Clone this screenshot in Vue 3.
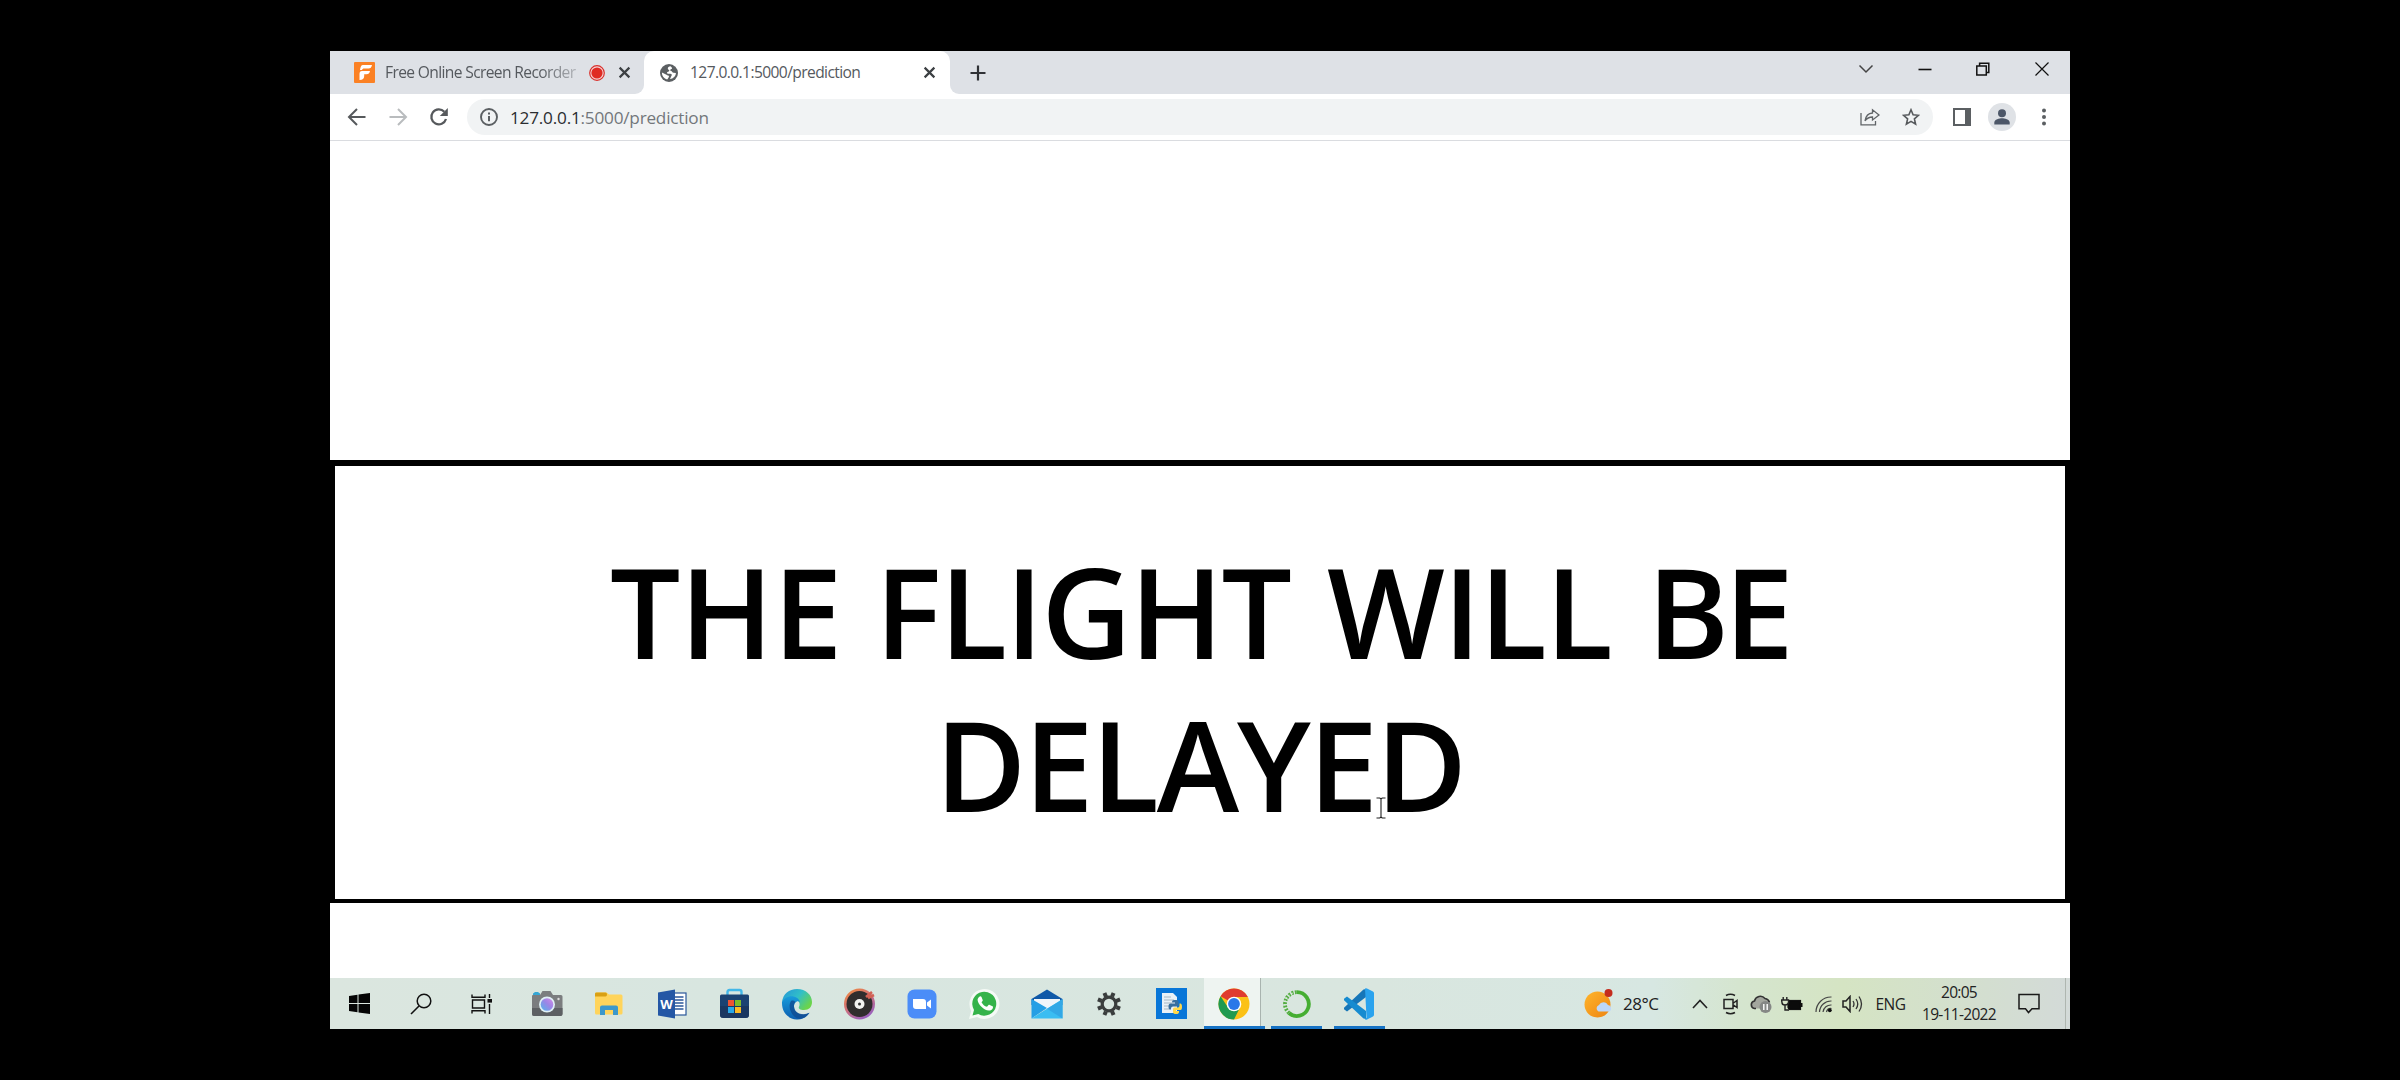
<script setup>
const first = ['THE', 'FLIGHT', 'WILL', 'BE']
</script>

<template>
  <div class="stage">
    <div class="window">
      <header class="tabs">
        <div class="tab idle">
          <svg class="fav" viewBox="0 0 21 21"><rect width="21" height="21" rx="1" fill="#fb8124" /><path d="M9 3h9c-.5 2.500-1.500 3.500-3.500 3.500H10c-1 0-1.500.5-2 1.500H6C6.500 5 7 3 9 3zM8 9h8c-.5 2.300-1.500 3.200-3.500 3.200h-2.300V14c0 2.500-1.500 4-4.700 4v-6C5.500 10 6.300 9 8 9z" fill="#fff" /></svg>
          <span class="title t1">Free Online Screen Recorder</span>
          <svg class="rec" viewBox="0 0 16 16"><circle cx="8" cy="8" r="7.300" fill="#f4d5d6" stroke="#d9302c" stroke-width="1.200" /><circle cx="8" cy="8" r="5.600" fill="#df2a22" /></svg>
          <svg class="x" viewBox="0 0 12 12"><path d="M1.500 1.500l9 9m0-9l-9 9" /></svg>
        </div>
        <div class="tab live">
          <svg class="globe" viewBox="0 0 18 18"><circle cx="9" cy="9" r="9" fill="#5b5f62" /><path d="M10.500 2.200c-1.700.2-2.700 1-2.700 2.300s1.500 1.200 1.500 2.200-2.300.8-2.300 2 1.600 1.100 3.200 1.100 2 1 1.300 2-.6 1.600-1.600 3.200c3.500-.3 5.900-2.700 6-6l-2.400-.2c-1.300 0-1.200-1.900-2.500-1.900s-.9-1.500.3-1.800 1-1.600-.8-2.900zM1.900 8.500l3.600 1.700c1.500.7 1.800 1.200 2.700 1.300s1 1.200.4 2-.6 1.500-1.500 2C4.100 14.700 1.900 12 1.900 8.500z" fill="#fff" /></svg>
          <span class="title t2">127.0.0.1:5000/prediction</span>
          <svg class="x" viewBox="0 0 12 12"><path d="M1.500 1.500l9 9m0-9l-9 9" /></svg>
        </div>
        <div class="strip">
          <svg class="plus" viewBox="0 0 16 16"><path d="M8 .5v15M.5 8h15" /></svg>
          <div class="controls">
            <svg viewBox="0 0 16 16"><path d="M1.500 4.500L8 11l6.500-6.500" stroke="#444" /></svg>
            <svg viewBox="0 0 16 16"><path d="M1.500 8.500h13" stroke-width="1.600" /></svg>
            <svg viewBox="0 0 16 16"><path d="M1.800 5h9.500v9H1.800zM4.600 4.500V2.200h9.200v9.300H11.500" stroke-width="1.500" /></svg>
            <svg viewBox="0 0 16 16"><path d="M1.500 1.500l13 13m0-13l-13 13" stroke-width="1.200" /></svg>
          </div>
        </div>
      </header>

      <nav class="toolbar">
        <div class="navs">
          <svg viewBox="0 0 20 20"><path d="M18.500 10H2.500M10 2L2 10l8 8" stroke="#56595c" /></svg>
          <svg viewBox="0 0 20 20"><path d="M1.500 10h16M10 2l8 8-8 8" stroke="#b9bcbe" /></svg>
          <svg viewBox="0 0 20 20"><path d="M17 12a7.500 7.500 0 1 1-1.700-7.300" stroke="#56595c" stroke-width="2.300" /><path d="M18.800 1v8h-8z" fill="#56595c" /></svg>
        </div>
        <div class="pill">
          <svg class="info" viewBox="0 0 18 18"><circle cx="9" cy="9" r="8" fill="none" stroke="#5b5f62" stroke-width="1.900" /><path d="M9 8v5.300M9 4.600v2" stroke="#5b5f62" stroke-width="2" /></svg>
          <span class="url"><b>127.0.0.1</b>:5000/prediction</span>
          <svg class="share" viewBox="0 0 20 18"><path d="M1 5v11.800h14.500V13M5 12.800C5.800 8 8.500 5.300 12.500 5V1.800L19 7l-6.500 5V9C9.500 9 7 10 5 12.800z" fill="none" stroke="#606467" stroke-width="1.300" /></svg>
          <svg class="star" viewBox="0 0 18 18"><path d="M9 1.800l2.100 5 5.400.5-4.100 3.600 1.200 5.300L9 13.400l-4.600 2.800 1.200-5.300-4.100-3.600 5.400-.5z" fill="none" stroke="#56595c" stroke-width="1.600" /></svg>
        </div>
        <svg class="side" viewBox="0 0 18 18"><path d="M0 0h18v18H0zM2 2v14h10V2z" fill="#5b5f62" fill-rule="evenodd" /></svg>
        <svg class="avatar" viewBox="0 0 28 28"><circle cx="14" cy="14" r="14" fill="#dfe2e6" /><circle cx="14" cy="10.200" r="4" fill="#4d5768" /><path d="M6.300 21.500v-2c0-3 5.200-4.300 7.700-4.300s7.700 1.300 7.700 4.300v2z" fill="#4d5768" /></svg>
        <svg class="dots" viewBox="0 0 6 18"><circle v-for="n in 3" :key="n" cx="3" :cy="n * 6.500 - 4" r="2" fill="#5b5f62" /></svg>
      </nav>

      <main class="page">
        <div class="result">
          <h1>
            <span class="line"><span v-for="w in first" :key="w" :class="w.toLowerCase()">{{ w }}</span></span>
            <span class="line second"><span class="delayed">DELAYED</span></span>
          </h1>
          <svg class="cursor" viewBox="0 0 10 22"><path d="M.5 1h3.300L5 2l1.200-1h3.300M.5 21h3.300L5 20l1.200 1h3.300M5 2v18" fill="none" stroke="#fff" stroke-width="2.600" /><path d="M.5 1h3.300L5 2l1.200-1h3.300M.5 21h3.300L5 20l1.200 1h3.300M5 2v18" fill="none" stroke="#222" stroke-width="1.100" /></svg>
        </div>
      </main>

      <footer class="taskbar">
        <div class="cell start"><svg width="21" height="21" viewBox="0 0 21 21"><path d="M0 3l8.500-1.200v8.200H0zM9.500 1.600L21 0v10H9.500zM0 11h8.500v8.200L0 18zM9.500 11H21v10L9.500 19.400z" fill="#050505" /></svg></div>
        <div class="cell search"><svg width="22" height="22" viewBox="0 0 22 22"><circle cx="14" cy="8" r="6.800" fill="none" stroke="#111" stroke-width="1.500" /><path d="M9 13L1 21" stroke="#111" stroke-width="1.600" /></svg></div>
        <div class="cell view"><svg width="22" height="22" viewBox="0 0 22 22"><path d="M1 1.500v2.800h13V1.500M1.500 7h12v8h-12zM1 20.500v-2.800h13v2.800M18.500 1v4M18.500 11v10" fill="none" stroke="#111" stroke-width="1.400" /><rect x="16.500" y="6" width="4.500" height="3.600" fill="#111" /></svg></div>
        <div class="cell"><svg width="32" height="26" viewBox="0 0 32 26"><path d="M2 5V2.500L4 1h3l2 1.500V5z" fill="#35a7d5" /><path d="M1 5q0-1 1-1h7l2.500-4h8L22 4h8q1.500 0 1.500 1.500V23q0 2-2 2H3q-2 0-2-2z" fill="#7b7d7f" /><path d="M1 17h30.500v6q0 2-2 2H3q-2 0-2-2z" fill="#5d6063" /><circle cx="16" cy="13.500" r="8" fill="#dff0f5" /><circle cx="16" cy="13.500" r="6.300" fill="url(#lens)" /><circle cx="27.500" cy="8" r="1.200" fill="#ddd" /><defs><linearGradient id="lens" x1="0" y1="1" x2="1" y2="0"><stop offset="0" stop-color="#51b5ec" /><stop offset=".55" stop-color="#9c85e6" /><stop offset="1" stop-color="#d68be7" /></linearGradient></defs></svg></div>
        <div class="cell"><svg width="28" height="24" viewBox="0 0 28 24"><path d="M0 2q0-1.500 1.500-1.500h10L14 2.500h12q1.500 0 1.500 1.500v17q0 1.500-1.500 1.500H1.500Q0 22.500 0 21z" fill="#ffd45b" /><path d="M0 1.500Q0 .5 1.500.5h9q1.500 0 1.500 2T10.500 4.500H0z" fill="#d9a014" /><path d="M5 23V15.500q0-2 2-2h14q2 0 2 2V23h-5v-5h-8v5z" fill="#3c98cb" /></svg></div>
        <div class="cell"><svg width="30" height="30" viewBox="0 0 30 30"><rect x="15" y="4" width="14" height="22" fill="#fff" stroke="#2b579a" stroke-width="1.200" /><path d="M18 8h8.500M18 11h8.500M18 14h8.500M18 17h8.500M18 20h8.500" stroke="#2b579a" stroke-width="1.300" /><path d="M1 3.500L18 .5v29L1 26.500z" fill="#2457a5" /><text x="9.500" y="19.500" text-anchor="middle" fill="#fff" font-size="13" font-weight="700" font-family="Open Sans, sans-serif">W</text></svg></div>
        <div class="cell"><svg width="31" height="31" viewBox="0 0 31 31"><path d="M8.500 7V4q0-2 2-2h10q2 0 2 2v3" fill="none" stroke="#43b7e8" stroke-width="2.400" /><path d="M1 8q0-1.500 1.500-1.500h26Q30 6.500 30 8v19q0 3-3 3H4q-3 0-3-3z" fill="#1b4272" /><path d="M1 18h29v9q0 3-3 3H4q-3 0-3-3z" fill="#1a3157" opacity=".6" /><path d="M9 12h6v6H9z" fill="#ef5331" /><path d="M16 12h6v6h-6z" fill="#7dbc28" /><path d="M9 19h6v6H9z" fill="#29a8e8" /><path d="M16 19h6v6h-6z" fill="#fcbb26" /></svg></div>
        <div class="cell"><svg width="32" height="32" viewBox="0 0 32 32"><defs><linearGradient id="e1" x1="0" y1="0" x2="1" y2=".6"><stop offset="0" stop-color="#2495d9" /><stop offset=".55" stop-color="#31bfc8" /><stop offset="1" stop-color="#6bd44b" /></linearGradient><linearGradient id="e2" x1="0" y1="0" x2="0" y2="1"><stop offset="0" stop-color="#199cdb" /><stop offset="1" stop-color="#0d5eb0" /></linearGradient></defs><path d="M1 14C2 6 8 1 16 1c9 0 15 6 15 13 0 5-3 8-8 8-4 0-6-1.500-5-3.200 2-3.500-1-7.800-6-7.800-4.500 0-9 1-11 3z" fill="url(#e1)" /><path d="M1 14c2-4 7-6.500 11.500-5.500 3.500.8 6 3 6.500 5.500-3-2-6 1-6 4.500C13 24 18 27 23 26.500c2.500-.3 4-1.200 5.500-1.700C26 29 21 32 15.500 31.500 7 31 .5 24 1 14z" fill="url(#e2)" /><path d="M10 13c-3 5-1 12 4 16 4 3 10 2 14.500-4.200-6 3-15 1.300-15.500-6.300-.2-2 .5-3.500 1.500-4.500-1.500-1.500-3-1.800-4.500-1z" fill="#124b91" opacity=".8" /></svg></div>
        <div class="cell"><svg width="32" height="32" viewBox="0 0 32 32"><defs><linearGradient id="g" x1="0" y1="0" x2=".6" y2="1"><stop offset="0" stop-color="#f28b37" /><stop offset=".5" stop-color="#d37276" /><stop offset="1" stop-color="#9a61bd" /></linearGradient></defs><circle cx="16.500" cy="16" r="15.500" fill="url(#g)" /><circle cx="16.500" cy="16" r="13" fill="#302d2d" /><circle cx="16.500" cy="16" r="5" fill="#f2f2f0" /><circle cx="16.500" cy="16" r="1.500" fill="#333" /><path d="M23 9l6-5M25 10l6-3" stroke="#d16154" stroke-width="2.600" /></svg></div>
        <div class="cell"><svg width="30" height="30" viewBox="0 0 30 30"><rect x=".5" y=".5" width="29" height="29" rx="7" fill="#4b8df8" /><path d="M6 10h10q3 0 3 3v7H9q-3 0-3-3zM20 13.500l4-3v9l-4-3z" fill="#fff" /></svg></div>
        <div class="cell"><svg width="32" height="32" viewBox="0 0 32 32"><path d="M1 31l2.200-8A15 15 0 1 1 9 29z" fill="#f5faf6" /><path d="M4.500 27.500l1.500-5.600a12 12 0 1 1 4.300 4.200z" fill="#35b34a" /><path d="M11 9c1-1 2-1 2.500 0l1.200 3c.2.7-.2 1.200-1.200 2.200 1.300 2.400 3 3.800 5.500 4.600l1.500-1.700c.4-.5.8-.5 1.300-.2l2.700 1.300c.7.300.6 1 .3 2-.5 1.500-2.500 2.500-4 2.400-5-.4-10.800-6-11.200-10.600C9.500 11 10.200 9.800 11 9z" fill="#fff" /></svg></div>
        <div class="cell"><svg width="32" height="30" viewBox="0 0 32 30"><path d="M.5 10L16 .5 31.500 10v6H.5z" fill="#1059a8" /><path d="M3 10h26v10H3z" fill="#f1f5fa" /><path d="M.500 10L16 19 .5 29.500z" fill="#259fe5" /><path d="M31.500 10L.5 29.500h31z" fill="#3abdf2" /><path d="M16 19.800L31.500 29.500v-19z" fill="#33a8e6" /></svg></div>
        <div class="cell"><svg width="24" height="24" viewBox="0 0 24 24"><g fill="none" stroke="#3a3d3d"><circle cx="12" cy="12" r="6.800" stroke-width="3.200" /><path d="M12 0v4M12 20v4M0 12h4M20 12h4M3.500 3.500l3 3M17.500 17.500l3 3M3.500 20.500l3-3M17.500 6.500l3-3" stroke-width="4" transform="rotate(22.500 12 12)" /></g></svg></div>
        <div class="cell"><svg width="31" height="31" viewBox="0 0 31 31"><rect width="31" height="31" fill="#0876d8" /><path d="M6 5h11l4 4v16H6z" fill="#e8f1f7" /><path d="M8 9h7M8 12h10M8 15h8M8 18h6M8 21h6" stroke="#a5b8c4" stroke-width="1" /><path d="M18 12h2.500q2 0 2 2v3q0 1.500-1.500 1.500h-4q-2 0-2 2v1H14q-1.500 0-1.500-3t2-3H19v-1h-3v-.500q0-2 2-2z" fill="#386f9e" /><path d="M23.500 15.500h.8q1.700 0 1.700 3.500t-2 3h-4v1h3v1q0 2-3 2t-3-2v-3q0-1.500 1.500-1.500h3.500q1.500 0 1.500-2z" fill="#ffd849" /></svg></div>
        <div class="cell active"><svg width="32" height="32" viewBox="0 0 32 32"><circle cx="16" cy="16" r="15.500" fill="#fbc116" /><path d="M16 16L2.600 8.200A15.500 15.500 0 0 1 29.400 8.200L29.800 9H16z" fill="#df3b2f" /><path d="M2.600 8.200A15.500 15.500 0 0 0 16 31.500L22 19.500 16 16l-6 3.500z" fill="#219a50" /><circle cx="16" cy="16" r="7.300" fill="#fff" /><circle cx="16" cy="16" r="5.900" fill="#2b78e8" /></svg></div>
        <div class="cell run"><svg width="28" height="28" viewBox="0 0 28 28"><path d="M14 2.200A11.900 11.900 0 1 1 6 23" fill="none" stroke="#45ae32" stroke-width="3.800" /><path d="M6 23A11.900 11.900 0 0 1 14 2.200" fill="none" stroke="#54ad42" stroke-width="3.800" stroke-dasharray="2 1.300" /><path d="M4.500 22A12 12 0 0 1 12 2.500" fill="none" stroke="#d9e9dd" stroke-width="1.200" stroke-dasharray="1.500 2" /></svg></div>
        <div class="cell run"><svg width="32" height="32" viewBox="0 0 32 32"><path d="M23 1v8L4 23.500l-3-2.300v-1.500L20.500 1.500z" fill="#1676b8" /><path d="M23 31v-8L4 8.500l-3 2.300v1.500L20.500 30.500z" fill="#168bd0" /><path d="M22 .5q1-.5 2 0L30 3.500q1 .5 1 1.700v21.600q0 1.200-1 1.700l-6 3q-1 .5-2 0l1.500-2z" fill="#2aa3ee" /></svg></div>

        <div class="tray">
          <svg width="29" height="29" viewBox="0 0 29 29"><defs><linearGradient id="sun" x1="0" y1="0" x2="1" y2="1"><stop offset="0" stop-color="#ffb52b" /><stop offset="1" stop-color="#ed8412" /></linearGradient></defs><circle cx="13.500" cy="15.500" r="13" fill="url(#sun)" /><path d="M14.500 22.500a3.600 3.600 0 0 1 .5-6.600 4.900 4.900 0 0 1 8.900.2 3.300 3.300 0 0 1 1 6.400z" fill="#bcd7fa" /><circle cx="24.500" cy="4" r="4" fill="#c42c1d" /></svg>
          <span class="temp">28°C</span>
          <svg width="18" height="18" viewBox="0 0 18 18"><path d="M2 13l7-7.500L16 13" fill="none" stroke="#222" stroke-width="1.600" /></svg>
          <svg width="18" height="22" viewBox="0 0 18 22"><path d="M4 2.500q4.500-2.500 9 0M4 19.500q4.500 2.500 9 0M2 6.500h9v9H2zM11.500 10l3.500-2.500v7L11.500 12" fill="none" stroke="#222" stroke-width="1.500" /></svg>
          <svg class="cloud" width="22" height="20" viewBox="0 0 22 20"><path d="M4.500 14.500a3.800 3.800 0 0 1 0-7.500A6 6 0 0 1 15 4.500q3.500.5 4.500 4v6z" fill="#a3a69e" /><path d="M6 14.500H4.500a3.800 3.800 0 0 1 0-7.500A6 6 0 0 1 15 4.500q3.500.5 4.500 4" fill="none" stroke="#333" stroke-width="1.600" /><circle cx="15.500" cy="13" r="6" fill="#858785" /><path d="M13.800 10v6M17.200 10v6" stroke="#fff" stroke-width="1.400" /></svg>
          <svg width="22" height="18" viewBox="0 0 22 18"><rect x="7" y="5.500" width="12.500" height="9" fill="#0b0b0b" stroke="#111" stroke-width="1.200" /><path d="M20.500 8v4" stroke="#111" stroke-width="2" /><path d="M.5 5h7v2.500Q7 10 4 10T1 7.500zM2.200 2v3M5.800 2v3M4 10v5h4" fill="#d7e3c8" stroke="#222" stroke-width="1.400" /></svg>
          <svg width="18" height="18" viewBox="0 0 18 18"><g fill="none" stroke="#444" stroke-width="1.200"><path d="M1 17A15 15 0 0 1 16.500 2M4.500 17A11.500 11.500 0 0 1 16.500 6M8 17a8 8 0 0 1 8.500-7M11.500 17a4.500 4.500 0 0 1 5-3.500" /></g><circle cx="14.800" cy="15.300" r="1.900" fill="#111" /></svg>
          <svg width="22" height="18" viewBox="0 0 22 18"><path d="M1 6h3l4-4.500v15L4 12H1z" fill="none" stroke="#222" stroke-width="1.500" /><path d="M11 6q2 3 0 6M14 4q3.500 5 0 10M17 1.500q5 7.500 0 15" fill="none" stroke="#333" stroke-width="1.300" /></svg>
          <span class="eng">ENG</span>
          <div class="clock"><span class="time">20:05</span><span class="date">19-11-2022</span></div>
          <svg width="22" height="21" viewBox="0 0 22 21"><path d="M1 1.500h20v14.300h-7L10.500 19.500 7.500 15.800H1z" fill="none" stroke="#1a1a1a" stroke-width="1.500" /></svg>
          <i class="peek"></i>
        </div>
      </footer>
    </div>
  </div>
</template>

<style>
html, body { margin: 0; background: #000; }
</style>

<style scoped>
.stage { width: 2400px; height: 1080px; box-sizing: border-box; padding: 51px 330px; background: #000; font-family: "Open Sans", "Noto Sans", sans-serif; overflow: hidden; }
.window { width: 1740px; height: 978px; display: flex; flex-direction: column; background: #fff; }
svg { display: block; flex: none; }
span { white-space: nowrap; }

.tabs { height: 43px; display: flex; background: linear-gradient(#fff, #fff) 300px 30px / 330px 13px no-repeat #dee1e6; }
.tab { display: flex; align-items: center; box-sizing: border-box; font-size: 15.600px; color: #55595e; }
.idle { width: 314px; padding-left: 24px; border-bottom-right-radius: 9px; background: #dee1e6; }
.live { width: 306px; padding-left: 16px; border-radius: 10px 10px 0 0; background: #fff; }
.fav { width: 21px; height: 21px; margin-right: 10px; }
.title { overflow: hidden; padding-bottom: 2px; }
.t1 { width: 192px; margin-right: 12px; letter-spacing: -.64px; -webkit-mask-image: linear-gradient(90deg, #000 80%, rgba(0, 0, 0, .3)); mask-image: linear-gradient(90deg, #000 80%, rgba(0, 0, 0, .3)); }
.rec { width: 16px; height: 16px; margin-right: 13px; }
.globe { width: 18px; height: 18px; margin-right: 12px; }
.t2 { width: 191px; margin-right: 42px; letter-spacing: -.6px; }
.x { width: 13px; height: 13px; fill: none; stroke: #3c4043; stroke-width: 2; }
.strip { flex: 1; display: flex; align-items: center; background: #dee1e6; border-bottom-left-radius: 9px; }
.plus { width: 16px; height: 16px; margin-left: 20px; stroke: #303236; stroke-width: 2.200; }
.controls { display: flex; gap: 42.700px; margin-left: auto; margin-right: 20px; padding-bottom: 7px; }
.controls svg { width: 16px; height: 16px; fill: none; stroke: #111; stroke-width: 1.500; }

.toolbar { height: 47px; box-sizing: border-box; display: flex; align-items: center; border-bottom: 1px solid #dadce0; background: #fff; }
.navs { display: flex; gap: 21px; padding-left: 17px; width: 120px; }
.navs svg { width: 20px; height: 20px; fill: none; stroke-width: 2; }
.pill { width: 1466px; height: 36px; display: flex; align-items: center; border-radius: 18px; background: #f1f3f4; }
.info { width: 18px; height: 18px; margin: 0 12px 0 13px; }
.url { font-size: 17.200px; letter-spacing: -.22px; color: #73777b; }
.url b { font-weight: 400; color: #2b2d30; }
.share { width: 20px; height: 18px; margin-left: auto; margin-right: 22px; }
.star { width: 18px; height: 18px; margin-right: 13px; }
.side { width: 18px; height: 18px; margin-left: 20px; }
.avatar { width: 28px; height: 28px; margin-left: 17px; }
.dots { width: 6px; height: 18px; margin-left: 25px; }

.page { height: 837px; display: flex; flex-direction: column; background: #fff; }
.result { position: relative; box-sizing: border-box; margin-top: 319px; height: 443px; border: solid #000; border-width: 6px 5px 4px; padding-top: 69px; }
h1 { margin: 0; font-size: 124.700px; line-height: 153px; font-weight: 600; color: #000; }
.line { display: flex; margin-left: 275px; }
.second { margin-left: 600px; }
.the { width: 265px; letter-spacing: -.6px; }
.flight { width: 452px; letter-spacing: -2px; }
.will { width: 320px; letter-spacing: -1.800px; }
.be { letter-spacing: -5px; }
.delayed { letter-spacing: -2.300px; }
.cursor { position: absolute; left: 1041px; top: 331px; width: 10px; height: 22px; }

.taskbar { height: 51px; display: flex; background: linear-gradient(90deg, #dbe6df 0, #d8e6e0 22%, #d9e6df 60%, #d7e7e2 76%, #d5e5cf 81%, #d5e4c3 87%, #d3dfce 94%, #d3dad8 100%); }
.cell { width: 62.500px; display: flex; align-items: center; justify-content: center; box-sizing: border-box; flex: none; position: relative; }
.start { width: 60.250px; padding-right: 2.250px; }
.search { padding-right: 2px; }
.view { padding-right: 4px; }
.active::before { content: ""; position: absolute; left: 1px; width: 56px; top: 0; bottom: 0; background: #eef4f1; border-right: 1px solid #a9b4af; }
.active svg { position: relative; }
.active::after, .run::after { content: ""; position: absolute; left: 6px; width: 51px; bottom: 0; height: 3px; background: #1672c4; }
.active::after { left: 1px; width: 61px; }
.tray { margin-left: auto; display: grid; grid-template-columns: 44px 64px 32px 30px 30px 32px 32px 26px 50px 86px 54px 14px; align-items: center; justify-items: center; height: 51px; font-size: 15.500px; color: #222; }
.temp { justify-self: start; margin-left: 3px; font-size: 17px; letter-spacing: -.5px; padding-bottom: 1px; }
.eng { letter-spacing: -.6px; margin-right: 1px; }
.clock { display: flex; flex-direction: column; align-items: center; line-height: 22px; padding-bottom: 1px; }
.time, .date { letter-spacing: -.7px; }
.peek { justify-self: start; margin-left: 9px; width: 1px; height: 51px; background: #aeb6b0; }
</style>
